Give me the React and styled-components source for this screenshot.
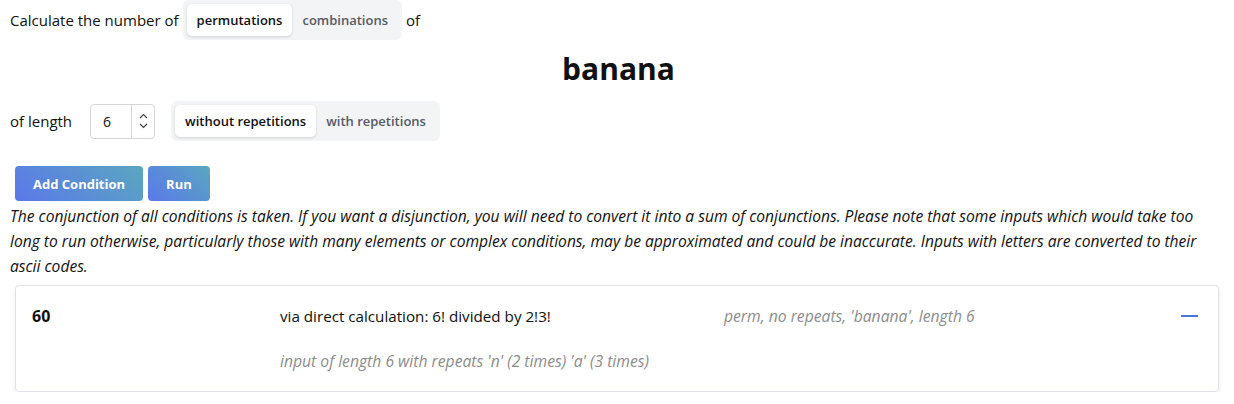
import React, { useState } from 'react';
import styled, { createGlobalStyle } from 'styled-components';

const GlobalStyle = createGlobalStyle`
  html, body {
    margin: 0;
    padding: 0;
    background: #fff;
  }
  body {
    font-family: "Open Sans", "Noto Sans", sans-serif;
    font-size: 15px;
    color: #111;
  }
`;

const Page = styled.div`
  padding: 0 10px;
`;

const Line = styled.div`
  display: flex;
  align-items: center;
  gap: ${(p) => p.gap || 0}px;
  height: 40px;
  margin-top: ${(p) => p.top || 0}px;
`;

const Segmented = styled.div`
  display: flex;
  align-items: center;
  background: #f3f4f6;
  border-radius: 6px;
  padding: 4px;
  height: 40px;
  box-sizing: border-box;
`;

const SegButton = styled.button`
  border: none;
  font-family: inherit;
  font-size: 13px;
  font-weight: 600;
  height: 32px;
  padding: 0 10px;
  border-radius: 5px;
  cursor: pointer;
  background: ${(p) => (p.active ? '#fff' : 'transparent')};
  color: ${(p) => (p.active ? '#111' : '#555a63')};
  box-shadow: ${(p) => (p.active ? '0 1px 3px rgba(0,0,0,0.15)' : 'none')};
`;

const Word = styled.h1`
  margin: 5px 0 0;
  text-align: center;
  font-size: 30px;
  font-weight: 700;
  line-height: 48px;
  padding-left: 3px;
`;

const NumberBox = styled.div`
  display: flex;
  flex: none;
  width: 65px;
  height: 35px;
  border: 1px solid #d6d6d6;
  border-radius: 4px;
  box-sizing: border-box;
  margin: 0 16px 0 18px;
`;

const NumberValue = styled.div`
  flex: 1;
  display: flex;
  align-items: center;
  padding-left: 12px;
  font-size: 14px;
  border-right: 1px solid #d6d6d6;
`;

const Spin = styled.div`
  width: 22px;
  display: flex;
  flex-direction: column;
  align-items: center;
  justify-content: center;
  gap: 4px;
  color: #444;
`;

const Actions = styled.div`
  display: flex;
  gap: 5px;
  margin: 25px 0 0 5px;
`;

const GradientButton = styled.button`
  border: none;
  border-radius: 4px;
  height: 35px;
  padding: 0 ${(p) => p.pad || 18}px;
  color: #fff;
  font-family: inherit;
  font-size: 13px;
  font-weight: 700;
  background: linear-gradient(45deg, #5b78ea 0%, #5aa6c0 100%);
  cursor: pointer;
`;

const Note = styled.p`
  margin: 3px 0 0;
  font-style: italic;
  font-size: 15.6px;
  line-height: 25px;
  color: #111;
`;

const Card = styled.div`
  margin: 6px 5px 0;
  border: 1px solid #e1e1ea;
  border-radius: 4px;
  box-shadow: 0 2px 5px rgba(0, 0, 0, 0.08);
  padding: 18px 16px 18px 16px;
  display: grid;
  grid-template-columns: 248px 444px 1fr auto;
  row-gap: 21px;
`;

const Count = styled.div`
  font-weight: 700;
  font-size: 16px;
  line-height: 24px;
`;

const Cell = styled.div`
  font-size: ${(p) => (p.muted ? 15.7 : 15.2)}px;
  line-height: 24px;
  font-style: ${(p) => (p.muted ? 'italic' : 'normal')};
  color: ${(p) => (p.muted ? '#8c8c8c' : '#111')};
  grid-column: ${(p) => p.col || 'auto'};
`;

const Collapse = styled.div`
  width: 17px;
  height: 2px;
  background: #4a74dc;
  margin: 11px 4px 0 0;
`;

const Chevron = ({ up }) => (
  <svg width="9" height="6" viewBox="0 0 9 6" fill="none" stroke="#444" strokeWidth="1.2">
    <path d={up ? 'M1 5 L4.5 1.5 L8 5' : 'M1 1 L4.5 4.5 L8 1'} />
  </svg>
);

export default function App() {
  const [kind, setKind] = useState('perm');
  const [rep, setRep] = useState('no');
  return (
    <Page>
      <GlobalStyle />
      <Line gap={4}>
        <span>Calculate the number of</span>
        <Segmented>
          <SegButton active={kind === 'perm'} onClick={() => setKind('perm')}>permutations</SegButton>
          <SegButton active={kind === 'comb'} onClick={() => setKind('comb')}>combinations</SegButton>
        </Segmented>
        <span>of</span>
      </Line>
      <Word>banana</Word>
      <Line top={8}>
        <span>of length</span>
        <NumberBox>
          <NumberValue>6</NumberValue>
          <Spin>
            <Chevron up />
            <Chevron />
          </Spin>
        </NumberBox>
        <Segmented>
          <SegButton active={rep === 'no'} onClick={() => setRep('no')}>without repetitions</SegButton>
          <SegButton active={rep === 'yes'} onClick={() => setRep('yes')}>with repetitions</SegButton>
        </Segmented>
      </Line>
      <Actions>
        <GradientButton>Add Condition</GradientButton>
        <GradientButton pad={18}>Run</GradientButton>
      </Actions>
      <Note>
        The conjunction of all conditions is taken. If you want a disjunction, you will need to convert it into a sum of
        conjunctions. Please note that some inputs which would take too long to run otherwise, particularly those with
        many elements or complex conditions, may be approximated and could be inaccurate. Inputs with letters are
        converted to their ascii codes.
      </Note>
      <Card>
        <Count>60</Count>
        <Cell>via direct calculation: 6! divided by 2!3!</Cell>
        <Cell muted>perm, no repeats, 'banana', length 6</Cell>
        <Collapse />
        <Cell muted col="2 / 4">input of length 6 with repeats 'n' (2 times) 'a' (3 times)</Cell>
      </Card>
    </Page>
  );
}
